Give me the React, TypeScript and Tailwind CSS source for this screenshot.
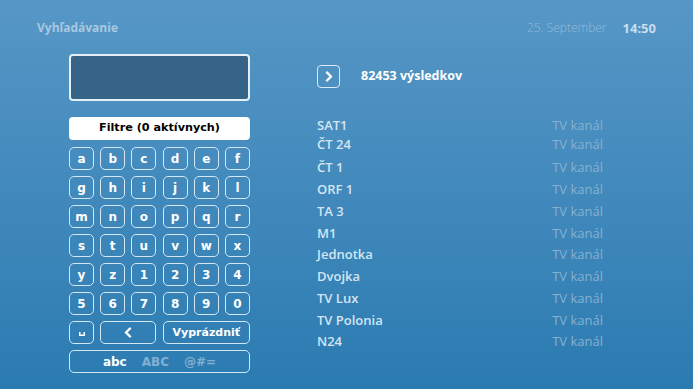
const keyRows = ["abcdef", "ghijkl", "mnopqr", "stuvwx", "yz1234", "567890"];

const results = [
  "SAT1",
  "ČT 24",
  "ČT 1",
  "ORF 1",
  "TA 3",
  "M1",
  "Jednotka",
  "Dvojka",
  "TV Lux",
  "TV Polonia",
  "N24",
];

const keyCls =
  "h-[23px] rounded-[5px] border-[1.5px] border-[#d4e7f5] flex items-center justify-center text-white font-bold leading-none font-['DejaVu_Sans',sans-serif]";

function Key({
  children,
  span = "",
  size = "text-[12px]",
}: {
  children: React.ReactNode;
  span?: string;
  size?: string;
}) {
  return <div className={`${keyCls} ${size} ${span}`}>{children}</div>;
}

export default function App() {
  return (
    <div className="w-[693px] h-[389px] overflow-hidden bg-linear-to-b from-[#5697c6] to-[#2a7bb1] font-['Open_Sans',sans-serif]">
      {/* header */}
      <div className="flex justify-between px-[37px] pt-[19px] leading-[18px]">
        <span className="text-[12px] font-bold text-[#a8c8e0]">Vyhľadávanie</span>
        <div className="flex items-center gap-[16px]">
          <span className="text-[12px] font-light text-[#93bada]">25. September</span>
          <span className="text-[13px] font-bold text-[#c8dded]">14:50</span>
        </div>
      </div>

      <div className="flex mt-[17px] pl-[69px]">
        {/* search + keyboard */}
        <div className="w-[181px] flex flex-col">
          <div className="h-[47px] rounded-[4px] border-2 border-[#e6eff6] bg-[#356487]" />
          <div className="mt-[16px] h-[23px] rounded-[4px] bg-white flex items-center justify-center text-black font-bold text-[11.2px] font-['DejaVu_Sans',sans-serif]">
            Filtre (0 aktívnych)
          </div>
          <div className="mt-[7px] grid grid-cols-6 gap-x-[6.2px] gap-y-[6px]">
            {keyRows.map((row) =>
              row.split("").map((ch) => <Key key={ch}>{ch}</Key>)
            )}
            <Key>
              <svg width="6" height="4" viewBox="0 0 6 4" className="mt-[3px]">
                <path d="M0.75 0 V3.25 H5.25 V0" fill="none" stroke="white" strokeWidth="1.5" />
              </svg>
            </Key>
            <Key span="col-span-2">
              <svg width="8" height="11" viewBox="0 0 8 11">
                <path d="M6 1.5 L2 5.5 L6 9.5" fill="none" stroke="white" strokeWidth="2.4" strokeLinecap="round" strokeLinejoin="round" />
              </svg>
            </Key>
            <Key span="col-span-3" size="text-[11px]">
              Vyprázdniť
            </Key>
            <Key span="col-span-6 gap-[15px]">
              <span>abc</span>
              <span className="text-[#82b0d4]">ABC</span>
              <span className="text-[#82b0d4]">@#=</span>
            </Key>
          </div>
        </div>

        {/* results */}
        <div className="ml-[67px] w-[286px] flex flex-col">
          <div className="mt-[11px] flex items-center">
            <div className="w-[23px] h-[23px] rounded-[4px] border-[1.5px] border-[#dbeaf5] flex items-center justify-center">
              <svg width="8" height="11" viewBox="0 0 8 11">
                <path d="M2 1.5 L6 5.5 L2 9.5" fill="none" stroke="white" strokeWidth="2.4" strokeLinecap="round" strokeLinejoin="round" />
              </svg>
            </div>
            <span className="ml-[21px] text-[12.5px] font-bold text-white">82453 výsledkov</span>
          </div>
          <div className="mt-[27.5px] flex flex-col">
            {results.map((name, i) => (
              <div
                key={name}
                className={`flex items-center justify-between leading-none ${
                  i < 2 ? "h-[19px]" : "h-[21.75px]"
                } ${i === 2 ? "mt-[3.6px]" : ""}`}
              >
                <span className="text-[13px] font-semibold text-[#d3e5f2]">{name}</span>
                <span className="text-[13px] text-[#86b1d3]">TV kanál</span>
              </div>
            ))}
          </div>
        </div>
      </div>
    </div>
  );
}
